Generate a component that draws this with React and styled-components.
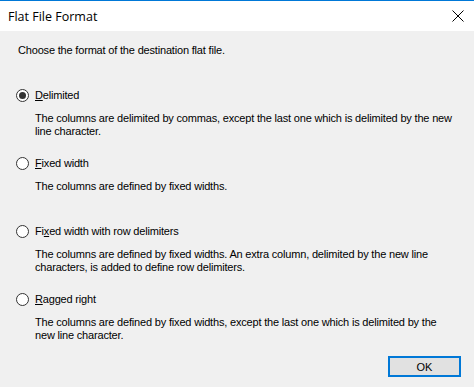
import React, { useState } from "react";
import styled, { createGlobalStyle } from "styled-components";

const GlobalStyle = createGlobalStyle`
  html, body {
    margin: 0;
    padding: 0;
    background: #f0f0f0;
  }
  body {
    font-family: "Liberation Sans", Arial, sans-serif;
  }
`;

const formats = [
  {
    key: "delimited",
    label: "Delimited",
    mnemonic: 0,
    text:
      "The columns are delimited by commas, except the last one which is delimited by the new line character.",
    gap: 19,
  },
  {
    key: "fixed",
    label: "Fixed width",
    mnemonic: 0,
    text: "The columns are defined by fixed widths.",
    gap: 32,
  },
  {
    key: "fixedrow",
    label: "Fixed width with row delimiters",
    mnemonic: 2,
    text:
      "The columns are defined by fixed widths. An extra column, delimited by the new line characters, is added to define row delimiters.",
    gap: 19,
  },
  {
    key: "ragged",
    label: "Ragged right",
    mnemonic: 0,
    text:
      "The columns are defined by fixed widths, except the last one which is delimited by the new line character.",
    gap: 0,
  },
];

export default function App() {
  const [selected, setSelected] = useState("delimited");

  return (
    <>
      <GlobalStyle />
      <Window>
        <TitleBar>
          <Title>Flat File Format</Title>
          <CloseButton aria-label="Close">
            <svg width="12" height="12" viewBox="0 0 12 12">
              <path d="M0.5 0.5 L11.5 11.5 M11.5 0.5 L0.5 11.5" stroke="#000" strokeWidth="1" />
            </svg>
          </CloseButton>
        </TitleBar>
        <Body>
          <Intro>Choose the format of the destination flat file.</Intro>
          <Options>
            {formats.map((f) => (
              <Option key={f.key} $gap={f.gap}>
                <RadioRow onClick={() => setSelected(f.key)}>
                  <Radio $checked={selected === f.key} />
                  <Label>
                    {f.label.slice(0, f.mnemonic)}
                    <u>{f.label[f.mnemonic]}</u>
                    {f.label.slice(f.mnemonic + 1)}
                  </Label>
                </RadioRow>
                <Description>{f.text}</Description>
              </Option>
            ))}
          </Options>
          <Footer>
            <OkButton>OK</OkButton>
          </Footer>
        </Body>
      </Window>
    </>
  );
}

const Window = styled.div`
  width: 474px;
  height: 387px;
  display: flex;
  flex-direction: column;
  border-top: 1px solid #0078d7;
  box-sizing: border-box;
  background: #f0f0f0;
  overflow: hidden;
`;

const TitleBar = styled.div`
  height: 30px;
  background: #fff;
  display: flex;
  align-items: center;
  justify-content: space-between;
  padding: 0 10px 0 8px;
`;

const Title = styled.div`
  font-family: "Open Sans", "Noto Sans", sans-serif;
  font-size: 12.5px;
  color: #000;
`;

const CloseButton = styled.div`
  width: 12px;
  height: 12px;
  display: flex;
`;

const Body = styled.div`
  flex: 1;
  display: flex;
  flex-direction: column;
  padding: 13px 12px 10px 18px;
  font-size: 11px;
  letter-spacing: -0.18px;
  color: #000;
`;

const Intro = styled.div`
  line-height: 13px;
  margin-bottom: 32px;
`;

const Options = styled.div`
  display: flex;
  flex-direction: column;
`;

const Option = styled.div`
  display: flex;
  flex-direction: column;
  margin-bottom: ${(p) => p.$gap}px;
`;

const RadioRow = styled.div`
  display: flex;
  align-items: center;
  gap: 6px;
  height: 13px;
  margin-left: -2px;
  cursor: default;
`;

const Radio = styled.span`
  width: 11px;
  height: 11px;
  border: 1px solid #333;
  border-radius: 50%;
  background: #fff;
  display: flex;
  align-items: center;
  justify-content: center;
  &::after {
    content: "";
    width: 7px;
    height: 7px;
    border-radius: 50%;
    background: #333;
    display: ${(p) => (p.$checked ? "block" : "none")};
  }
`;

const Label = styled.span`
  line-height: 13px;
`;

const Description = styled.div`
  margin: 10px 9px 0 17px;
  line-height: 13px;
  color: #000;
`;

const Footer = styled.div`
  margin-top: auto;
  display: flex;
  justify-content: flex-end;
`;

const OkButton = styled.button`
  width: 73px;
  height: 21px;
  border: 2px solid #0078d7;
  background: #e1e1e1;
  font-family: "Liberation Sans", Arial, sans-serif;
  font-size: 11px;
  color: #000;
  padding: 0;
  margin-right: 1px;
`;
